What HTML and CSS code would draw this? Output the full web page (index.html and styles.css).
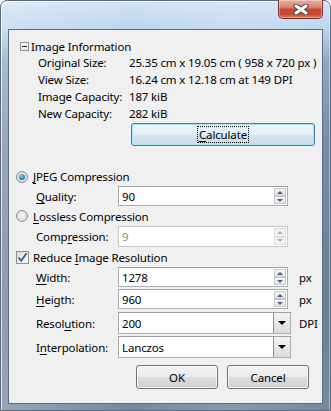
FILE: index.html
```html
<!DOCTYPE html>
<html lang="en">
<head>
<meta charset="UTF-8">
<title>Image Options</title>
<link rel="stylesheet" href="styles.css">
</head>
<body>
<div class="window">
    <div class="close">
        <svg width="16" height="11" viewBox="0 0 16 11">
            <path d="M3 2 L13 9 M13 2 L3 9" stroke="#4a4a4a" stroke-width="5" stroke-linecap="round"/>
            <path d="M3 2 L13 9 M13 2 L3 9" stroke="#fff" stroke-width="3" stroke-linecap="round"/>
        </svg>
    </div>
    <div class="client">
        <div class="info">
            <div class="info-head"><span class="minus"></span><span>Image Information</span></div>
            <div class="info-row"><span class="info-label">Original Size:</span><span>25.35 cm x 19.05 cm ( 958 x 720 px )</span></div>
            <div class="info-row"><span class="info-label">View Size:</span><span>16.24 cm x 12.18 cm at 149 DPI</span></div>
            <div class="info-row"><span class="info-label">Image Capacity:</span><span>187 kiB</span></div>
            <div class="info-row"><span class="info-label">New Capacity:</span><span>282 kiB</span></div>
            <button class="btn calc"><span class="focus"><u>C</u>alculate</span></button>
        </div>

        <div class="option opt-jpeg"><span class="radio checked"></span><span><u>J</u>PEG Compression</span></div>
        <div class="field f-quality">
            <span class="field-label"><u>Q</u>uality:</span>
            <div class="spin"><span class="val">90</span><span class="arrows"><i class="up"></i><i class="down"></i></span></div>
        </div>
        <div class="option opt-lossless"><span class="radio"></span><span><u>L</u>ossless Compression</span></div>
        <div class="field f-comp">
            <span class="field-label">Comp<u>r</u>ession:</span>
            <div class="spin disabled"><span class="val">9</span><span class="arrows"><i class="up"></i><i class="down"></i></span></div>
        </div>

        <div class="option opt-reduce">
            <span class="check"><svg width="11" height="11" viewBox="0 0 11 11"><path d="M1.5 5.5 L4.2 8.8 L9.5 1.2" fill="none" stroke="#2f5ea8" stroke-width="1.8"/></svg></span>
            <span>Reduce <u>I</u>mage Resolution</span>
        </div>
        <div class="field f-width">
            <span class="field-label"><u>W</u>idth:</span>
            <div class="spin"><span class="val">1278</span><span class="arrows"><i class="up"></i><i class="down"></i></span></div>
            <span class="unit">px</span>
        </div>
        <div class="field f-height">
            <span class="field-label"><u>H</u>eigth:</span>
            <div class="spin"><span class="val">960</span><span class="arrows"><i class="up"></i><i class="down"></i></span></div>
            <span class="unit">px</span>
        </div>
        <div class="field f-res">
            <span class="field-label">Resol<u>u</u>tion:</span>
            <div class="combo"><span class="val">200</span><span class="drop"><i></i></span></div>
            <span class="unit">DPI</span>
        </div>
        <div class="field f-interp">
            <span class="field-label">I<u>n</u>terpolation:</span>
            <div class="combo"><span class="val">Lanczos</span><span class="drop"><i></i></span></div>
        </div>

        <div class="actions">
            <button class="btn">OK</button>
            <button class="btn">Cancel</button>
        </div>
    </div>
</div>
</body>
</html>
```

FILE: styles.css
```css
body {
    margin: 0;
    width: 331px;
    height: 411px;
    overflow: hidden;
    font-family: "Noto Sans", sans-serif;
    font-size: 11.5px;
    letter-spacing: -0.15px;
    color: #000;
}

.window {
    position: relative;
    height: 411px;
    box-sizing: border-box;
    padding: 28px 7px 6px 7px;
    border-radius: 7px 7px 0 0;
    border: 1px solid #5d6b7b;
    background:
        linear-gradient(to right, rgba(255,255,255,0.25), rgba(255,255,255,0) 40%, rgba(255,255,255,0.15) 70%, rgba(255,255,255,0)),
        linear-gradient(to bottom, #d3e4f6 0, #bcd5ee 28px, #8fa7c0 60px, #768ca3 140px, #6a7e94 300px, #75899f 411px);
    box-shadow: inset 1px 1px 0 rgba(255,255,255,0.7), inset -1px 0 0 rgba(255,255,255,0.4);
}

.close {
    position: absolute;
    left: 277px;
    top: -1px;
    width: 45px;
    height: 19px;
    box-sizing: border-box;
    border: 1px solid #6b3027;
    border-top: none;
    border-radius: 0 0 5px 5px;
    background: linear-gradient(to bottom, #e9ab9c 0, #d98674 40%, #c6452f 52%, #c94a33 80%, #e27a5c 100%);
    box-shadow: inset 0 0 0 1px rgba(255,255,255,0.35);
    display: flex;
    justify-content: center;
    align-items: center;
}

.client {
    height: 100%;
    box-sizing: border-box;
    border: 1px solid #5e6d7e;
    background: #f0f0f0;
    display: flex;
    flex-direction: column;
}

u {
    text-decoration: underline;
    text-underline-offset: 2px;
}

/* info group */
.info {
    padding: 9px 0 0 11px;
    display: flex;
    flex-direction: column;
}

.info-head {
    height: 15px;
    line-height: 15px;
    display: flex;
    align-items: center;
}

.minus {
    width: 9px;
    height: 9px;
    box-sizing: border-box;
    border: 1px solid #919191;
    background: linear-gradient(#fff, #e6e6e6);
    margin-right: 2px;
    position: relative;
}

.minus::after {
    content: "";
    position: absolute;
    left: 1px;
    right: 1px;
    top: 3px;
    height: 1px;
    background: #222;
}

.info-row {
    height: 17px;
    line-height: 17px;
    padding-left: 18px;
    display: flex;
}

.info-label {
    width: 91px;
    flex-shrink: 0;
}

.btn {
    font-family: inherit;
    font-size: inherit;
    letter-spacing: inherit;
    color: #000;
    height: 24px;
    box-sizing: border-box;
    border: 1px solid #707070;
    border-radius: 3px;
    background: linear-gradient(to bottom, #f2f2f2 0, #ebebeb 50%, #dddddd 51%, #cfcfcf 100%);
    box-shadow: inset 0 0 0 1px rgba(255,255,255,0.8);
    padding: 0;
}

.calc {
    margin: 1px 0 0 111px;
    width: 184px;
    height: 23px;
    border-color: #3c7fb1;
    box-shadow: inset 0 0 0 1px #a8e4f8;
    background: linear-gradient(to bottom, #eef5fa 0, #e4eef6 50%, #d5e5f1 51%, #c9ddec 100%);
}

.focus {
    outline: 1px dotted #000;
    padding: 0 1px;
}

/* options */
.option {
    height: 20px;
    display: flex;
    align-items: center;
    padding-left: 7px;
}

.opt-jpeg {
    margin-top: 21px;
    height: 19px;
}

.radio {
    width: 12px;
    height: 12px;
    box-sizing: border-box;
    border-radius: 50%;
    border: 1px solid #8e8f8f;
    background: radial-gradient(circle at 50% 40%, #f4f4f4 0, #dcdcdc 70%, #cfcfcf 100%);
    margin-right: 5px;
    position: relative;
}

.radio.checked::after {
    content: "";
    position: absolute;
    left: 2px;
    top: 2px;
    width: 6px;
    height: 6px;
    border-radius: 50%;
    background: radial-gradient(circle at 40% 35%, #8fd8f6 0, #2e8fcc 50%, #164a80 100%);
}

.check {
    width: 13px;
    height: 13px;
    box-sizing: border-box;
    border: 1px solid #8e8f8f;
    background: linear-gradient(135deg, #dcdcdc, #fbfbfb);
    margin-right: 4px;
    display: flex;
    justify-content: center;
    align-items: center;
}

.field {
    display: flex;
    align-items: center;
    height: 20px;
    padding-left: 27px;
}

.field-label {
    width: 82px;
    flex-shrink: 0;
}

.f-comp {
    height: 21px;
}

.f-height {
    margin-top: 2px;
}

.f-res {
    margin-top: 3px;
    height: 22px;
}

.f-interp {
    margin-top: 2px;
    height: 22px;
}

.spin,
.combo {
    height: 100%;
    box-sizing: border-box;
    border: 1px solid #abadb3;
    border-top-color: #a0a0a0;
    background: #fff;
    display: flex;
    align-items: center;
}

.spin {
    width: 170px;
}

.combo {
    width: 173px;
}

.val {
    flex: 1;
    padding-left: 3px;
}

.spin.disabled {
    border-color: #c9c9c9;
    color: #8a8a8a;
}

.arrows {
    width: 13px;
    height: 100%;
    box-sizing: border-box;
    padding: 1px 1px 1px 0;
    display: flex;
    flex-direction: column;
}

.arrows i {
    flex: 1;
    border: 1px solid #c5c8cd;
    background: linear-gradient(#f6f6f6, #e4e4e4);
    display: flex;
    justify-content: center;
    align-items: center;
}

.arrows i::after {
    content: "";
    border-left: 3px solid transparent;
    border-right: 3px solid transparent;
}

.arrows .up::after {
    border-bottom: 3px solid #4a5f8a;
}

.arrows .down::after {
    border-top: 3px solid #4a5f8a;
}

.disabled .arrows i {
    border-color: #dcdcdc;
    background: #f4f4f4;
}

.disabled .arrows .up::after {
    border-bottom-color: #b0b0b0;
}

.disabled .arrows .down::after {
    border-top-color: #b0b0b0;
}

.drop {
    width: 17px;
    height: 100%;
    box-sizing: border-box;
    border-left: 1px solid #8f8f8f;
    background: linear-gradient(#f3f3f3, #dcdcdc);
    display: flex;
    justify-content: center;
    align-items: center;
}

.drop i {
    border-left: 4px solid transparent;
    border-right: 4px solid transparent;
    border-top: 4px solid #000;
}

.unit {
    margin-left: 11px;
}

.f-res .unit {
    margin-left: 8px;
}

.actions {
    margin-top: 7px;
    display: flex;
    justify-content: flex-end;
    gap: 9px;
    padding-right: 13px;
}

.actions .btn {
    width: 82px;
}
```
